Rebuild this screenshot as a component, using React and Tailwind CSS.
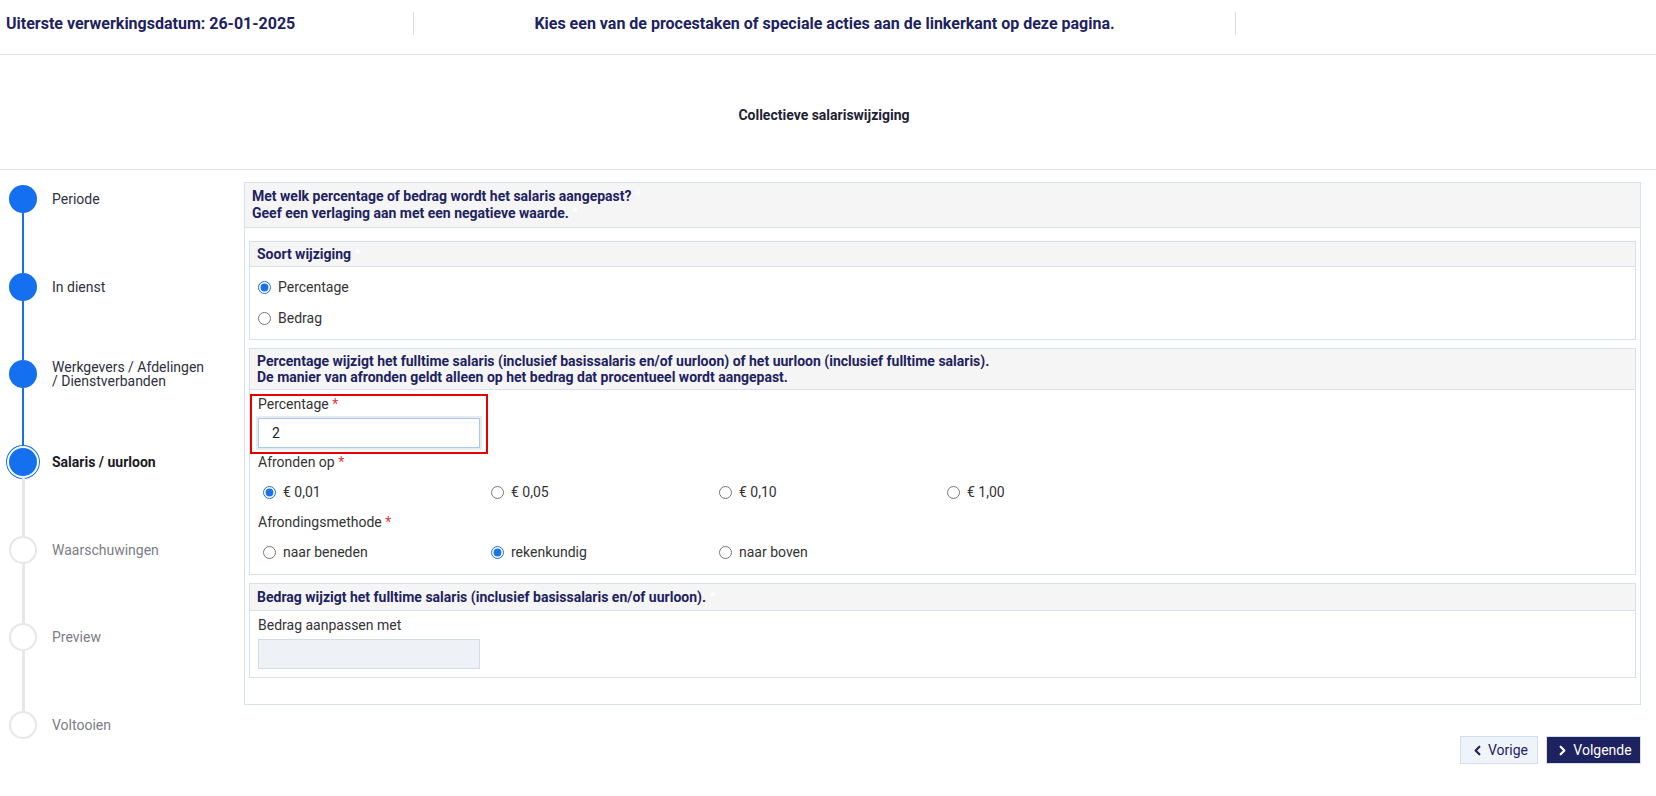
import { ChevronLeft, ChevronRight } from "lucide-react";

const NAVY = "text-[#1d2261]";

const steps = [
  { label: "Periode", state: "done" },
  { label: "In dienst", state: "done" },
  { label: "Werkgevers / Afdelingen / Dienstverbanden", state: "done" },
  { label: "Salaris / uurloon", state: "current" },
  { label: "Waarschuwingen", state: "todo" },
  { label: "Preview", state: "todo" },
  { label: "Voltooien", state: "todo" },
];

function StepCircle({ state }) {
  if (state === "done") return <div className="h-[28px] w-[28px] shrink-0 rounded-full bg-[#1570ef]" />;
  if (state === "current")
    return <div className="h-[28px] w-[28px] shrink-0 rounded-full bg-[#1570ef] ring-1 ring-[#1570ef] ring-offset-2" />;
  return <div className="h-[28px] w-[28px] shrink-0 rounded-full border-2 border-[#e6e7ea] bg-white" />;
}

function Stepper() {
  return (
    <div className="w-[244px] shrink-0 pt-[15px]">
      {steps.map((s, i) => {
        const last = i === steps.length - 1;
        return (
          <div key={s.label} className={`flex ${last ? "" : "h-[87.7px]"}`}>
            <div className="flex w-[46px] flex-col items-center">
              <StepCircle state={s.state} />
              {!last && (
                <div className={s.state === "done" ? "w-[2px] flex-1 bg-[#1570ef]" : "w-[3px] flex-1 bg-[#e6e7ea]"} />
              )}
            </div>
            <div
              className={`flex h-[28px] w-[160px] items-center pl-[6px] text-[14px] leading-[14px] ${
                s.state === "current" ? "font-bold text-[#1a1a24]" : s.state === "done" ? "text-[#2e3140]" : "text-[#7a7d85]"
              }`}
            >
              {s.label}
            </div>
          </div>
        );
      })}
    </div>
  );
}

function Req() {
  return <span className="text-[#e53935]"> *</span>;
}

function Faint() {
  return <span className="font-normal text-white"> *</span>;
}

function Radio({ name, label, checked, inline }) {
  return (
    <label className={`flex items-center gap-[7px] text-[14px] text-[#333] ${inline ? "w-[228px] pl-[5px]" : ""}`}>
      <input type="radio" name={name} defaultChecked={checked} className="m-0 h-[13px] w-[13px] accent-[#1a73e8]" />
      {label}
    </label>
  );
}

function Box({ title, children, pad = "py-[4px]" }) {
  return (
    <div className="border border-[#d5e1ec]">
      <div className={`border-b border-[#d5e1ec] bg-[#f5f5f5] px-[7px] ${pad} text-[14px] font-bold leading-[16px] ${NAVY}`}>
        {title}
      </div>
      {children}
    </div>
  );
}

export default function App() {
  return (
    <div className="min-h-[796px] bg-white font-[Roboto,sans-serif]">
      {/* top bar */}
      <header className="h-[55px] border-b border-[#e3e3e3]">
        <div className={`flex h-[47px] items-center text-[16px] font-bold ${NAVY}`}>
          <div className="w-[413px] pl-[6px]">Uiterste verwerkingsdatum: 26-01-2025</div>
          <div className="h-[23px] w-px bg-[#d5dde6]" />
          <div className="w-[821px] text-center">Kies een van de procestaken of speciale acties aan de linkerkant op deze pagina.</div>
          <div className="h-[23px] w-px bg-[#d5dde6]" />
        </div>
      </header>

      <div className="flex h-[115px] items-center justify-center border-b border-[#e3e3e3] pr-[8px] pt-[6px] text-[14px] font-bold text-[#1e2235]">
        Collectieve salariswijziging
      </div>

      <div className="flex">
        <Stepper />

        <div className="flex-1 pr-[15px] pt-[12px]">
          <div className="border border-[#d5e1ec]">
            <div className={`border-b border-[#d5e1ec] bg-[#f5f5f5] px-[7px] pb-[5px] pt-[5px] text-[14px] font-bold leading-[17px] ${NAVY}`}>
              <div>
                Met welk percentage of bedrag wordt het salaris aangepast?<Faint />
              </div>
              <div>
                Geef een verlaging aan met een negatieve waarde.<Faint />
              </div>
            </div>

            <div className="flex flex-col gap-[8px] px-[4px] pb-[26px] pt-[13px]">
              <Box
                title={
                  <>
                    Soort wijziging<Faint />
                  </>
                }
              >
                <div className="px-[8px] py-[5px]">
                  <div className="flex h-[31px] items-center">
                    <Radio name="soort" label="Percentage" checked />
                  </div>
                  <div className="flex h-[31px] items-center">
                    <Radio name="soort" label="Bedrag" />
                  </div>
                </div>
              </Box>

              <Box
                title={
                  <>
                    <div>Percentage wijzigt het fulltime salaris (inclusief basissalaris en/of uurloon) of het uurloon (inclusief fulltime salaris).</div>
                    <div>De manier van afronden geldt alleen op het bedrag dat procentueel wordt aangepast.</div>
                  </>
                }
              >
                <div className="px-[8px] pb-[2px] pt-[4px] text-[14px] text-[#333]">
                  <div className="relative w-[222px]">
                    <div className="h-[20px] leading-[20px]">
                      Percentage
                      <Req />
                    </div>
                    <input
                      defaultValue="2"
                      className="mt-[4px] block h-[30px] w-[222px] border border-[#a9c9ef] bg-white px-[13px] text-[14px] text-[#222] shadow-[0_0_0_2px_#e9ecef] outline-none"
                    />
                    <div className="pointer-events-none absolute -bottom-[6px] -left-[8px] -right-[8px] top-0 border-2 border-[#e60000]" />
                  </div>
                  <div className="mt-[4px] h-[20px] leading-[20px]">
                    Afronden op
                    <Req />
                  </div>
                  <div className="flex h-[40px] items-center">
                    <Radio name="afronden" label="€ 0,01" checked inline />
                    <Radio name="afronden" label="€ 0,05" inline />
                    <Radio name="afronden" label="€ 0,10" inline />
                    <Radio name="afronden" label="€ 1,00" inline />
                  </div>
                  <div className="h-[20px] leading-[20px]">
                    Afrondingsmethode
                    <Req />
                  </div>
                  <div className="flex h-[40px] items-center">
                    <Radio name="methode" label="naar beneden" inline />
                    <Radio name="methode" label="rekenkundig" checked inline />
                    <Radio name="methode" label="naar boven" inline />
                  </div>
                </div>
              </Box>

              <Box
                pad="py-[5px]"
                title={
                  <>
                    Bedrag wijzigt het fulltime salaris (inclusief basissalaris en/of uurloon).<Faint />
                  </>
                }
              >
                <div className="px-[8px] pb-[8px] pt-[4px] text-[14px] text-[#333]">
                  <div className="h-[20px] leading-[20px]">Bedrag aanpassen met</div>
                  <input disabled className="mt-[4px] block h-[30px] w-[222px] border border-[#d5dce3] bg-[#eef2f6]" />
                </div>
              </Box>
            </div>
          </div>

          <div className="mt-[31px] flex justify-end gap-[8px]">
            <button className={`flex h-[28px] w-[78px] items-center justify-center gap-[3px] border border-[#d5dfe9] bg-[#eef4fa] text-[14px] ${NAVY}`}>
              <ChevronLeft size={15} strokeWidth={3.5} /> Vorige
            </button>
            <button className="flex h-[28px] w-[95px] items-center justify-center gap-[3px] border border-[#d5dfe9] bg-[#1d2261] text-[14px] text-white">
              <ChevronRight size={15} strokeWidth={3.5} /> Volgende
            </button>
          </div>
        </div>
      </div>
    </div>
  );
}
